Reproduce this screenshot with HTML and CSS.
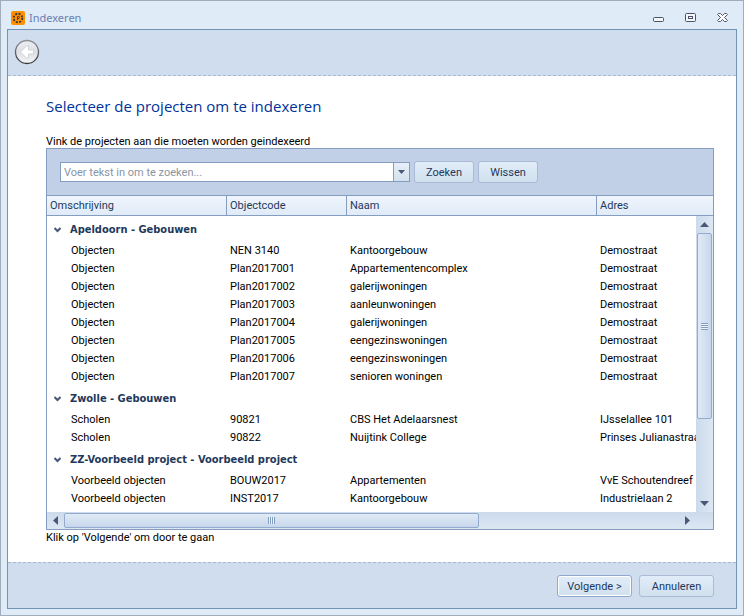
FILE: index.html
```html
<!DOCTYPE html>
<html lang="nl">
    <head>
        <meta charset="UTF-8" />
        <meta name="viewport" content="width=device-width, initial-scale=1.0" />
        <title>Indexeren</title>
        <link rel="stylesheet" href="styles.css">
    </head>
    <body>
        <div class="window">
            <header class="titlebar">
                <svg class="app-icon" width="14" height="14" viewBox="0 0 14 14">
                    <rect width="14" height="14" rx="2" fill="#ff9000" />
                    <circle cx="7" cy="7" r="4.3" fill="none" stroke="#3d3a3c" stroke-width="1.9" stroke-dasharray="2 1.377" />
                    <path d="M6.500 9V5.500h1a1 1 0 0 1 0 2h-1" fill="none" stroke="#3d3a3c" />
                </svg>
                <span class="title">Indexeren</span>
                <div class="window-buttons">
                    <button aria-label="Minimaliseren">
                        <svg width="11" height="10" viewBox="0 0 11 10">
                            <rect x="0.5" y="4.5" width="10" height="4" rx="1" fill="#f3f7fb" stroke="#4d5166" />
                        </svg>
                    </button>
                    <button aria-label="Maximaliseren">
                        <svg width="11" height="10" viewBox="0 0 11 10">
                            <rect x="0.5" y="0.5" width="10" height="8" rx="1" fill="#f3f7fb" stroke="#4d5166" />
                            <rect x="3.5" y="3.5" width="4" height="2" fill="#fff" stroke="#4d5166" />
                        </svg>
                    </button>
                    <button aria-label="Sluiten">
                        <svg width="11" height="10" viewBox="0 0 11 10">
                            <path d="M0.5 1.5l1-1h2l2 2 2-2h2l1 1-3 3 3 3-1 1h-2l-2-2-2 2h-2l-1-1 3-3z" fill="#fff" stroke="#4d5166" />
                        </svg>
                    </button>
                </div>
            </header>

            <div class="frame">
                <div class="wizard-header">
                    <button class="back" aria-label="Vorige" disabled>
                        <svg width="26" height="26" viewBox="0 0 26 26">
                            <defs>
                                <linearGradient id="ring" x1="0" y1="0" x2="0" y2="1">
                                    <stop offset="0" stop-color="#8e9094" />
                                    <stop offset="1" stop-color="#34363a" />
                                </linearGradient>
                                <linearGradient id="disc" x1="0" y1="0" x2="0" y2="1">
                                    <stop offset="0" stop-color="#eceef1" />
                                    <stop offset="0.5" stop-color="#dce0e5" />
                                    <stop offset="1" stop-color="#f4f6f8" />
                                </linearGradient>
                            </defs>
                            <circle cx="13" cy="13" r="11.5" fill="url(#disc)" stroke="url(#ring)" stroke-width="1.3" />
                            <path d="M6.5 13l6-6h2v4h5v4h-5v4h-2z" fill="#fff" stroke="#c9cdd2" stroke-width="0.8" stroke-linejoin="round" />
                        </svg>
                    </button>
                </div>

                <main class="page">
                    <h1>Selecteer de projecten om te indexeren</h1>
                    <p class="hint">Vink de projecten aan die moeten worden geindexeerd</p>

                    <section class="grid-panel">
                        <form class="search">
                            <div class="combo">
                                <input type="text" aria-label="Zoeken" placeholder="Voer tekst in om te zoeken..." />
                                <button type="button" class="combo-button" aria-label="Geschiedenis">
                                    <svg width="7" height="4" viewBox="0 0 7 4"><path d="M0 0h7L3.500 4z" fill="#4a5878" /></svg>
                                </button>
                            </div>
                            <button type="button" class="btn search-btn">Zoeken</button>
                            <button type="button" class="btn search-btn">Wissen</button>
                        </form>

                        <div class="grid">
                            <table>
                                <colgroup>
                                    <col class="col-desc" />
                                    <col class="col-code" />
                                    <col class="col-name" />
                                    <col />
                                </colgroup>
                                <thead>
                                    <tr>
                                        <th>Omschrijving</th>
                                        <th>Objectcode</th>
                                        <th>Naam</th>
                                        <th>Adres</th>
                                    </tr>
                                </thead>
                                <tbody>
                                    <tr class="group">
                                        <td colspan="4"><svg class="chevron" width="7" height="6" viewBox="0 0 7 6"><path d="M0.500 1l3 3 3-3" /></svg>Apeldoorn - Gebouwen</td>
                                    </tr>
                                    <tr><td>Objecten</td><td>NEN 3140</td><td>Kantoorgebouw</td><td>Demostraat</td></tr>
                                    <tr><td>Objecten</td><td>Plan2017001</td><td>Appartementencomplex</td><td>Demostraat</td></tr>
                                    <tr><td>Objecten</td><td>Plan2017002</td><td>galerijwoningen</td><td>Demostraat</td></tr>
                                    <tr><td>Objecten</td><td>Plan2017003</td><td>aanleunwoningen</td><td>Demostraat</td></tr>
                                    <tr><td>Objecten</td><td>Plan2017004</td><td>galerijwoningen</td><td>Demostraat</td></tr>
                                    <tr><td>Objecten</td><td>Plan2017005</td><td>eengezinswoningen</td><td>Demostraat</td></tr>
                                    <tr><td>Objecten</td><td>Plan2017006</td><td>eengezinswoningen</td><td>Demostraat</td></tr>
                                    <tr><td>Objecten</td><td>Plan2017007</td><td>senioren woningen</td><td>Demostraat</td></tr>
                                    <tr class="group">
                                        <td colspan="4"><svg class="chevron" width="7" height="6" viewBox="0 0 7 6"><path d="M0.500 1l3 3 3-3" /></svg>Zwolle - Gebouwen</td>
                                    </tr>
                                    <tr><td>Scholen</td><td>90821</td><td>CBS Het Adelaarsnest</td><td>IJsselallee 101</td></tr>
                                    <tr><td>Scholen</td><td>90822</td><td>Nuijtink College</td><td>Prinses Julianastraat</td></tr>
                                    <tr class="group">
                                        <td colspan="4"><svg class="chevron" width="7" height="6" viewBox="0 0 7 6"><path d="M0.500 1l3 3 3-3" /></svg>ZZ-Voorbeeld project - Voorbeeld project</td>
                                    </tr>
                                    <tr><td>Voorbeeld objecten</td><td>BOUW2017</td><td>Appartementen</td><td>VvE Schoutendreef</td></tr>
                                    <tr><td>Voorbeeld objecten</td><td>INST2017</td><td>Kantoorgebouw</td><td>Industrielaan 2</td></tr>
                                </tbody>
                            </table>

                            <div class="scroll-v">
                                <svg class="arrow" width="9" height="5" viewBox="0 0 9 5"><path d="M0 5h9L4.500 0z" /></svg>
                                <div class="track">
                                    <div class="thumb"><span class="grip"></span></div>
                                </div>
                                <svg class="arrow" width="9" height="5" viewBox="0 0 9 5"><path d="M0 0h9L4.500 5z" /></svg>
                            </div>

                            <div class="scroll-h">
                                <svg class="arrow" width="5" height="9" viewBox="0 0 5 9"><path d="M5 0v9L0 4.500z" /></svg>
                                <div class="track">
                                    <div class="thumb"><span class="grip"></span></div>
                                </div>
                                <svg class="arrow" width="5" height="9" viewBox="0 0 5 9"><path d="M0 0v9L5 4.500z" /></svg>
                            </div>
                        </div>
                    </section>

                    <p class="next-hint">Klik op 'Volgende' om door te gaan</p>
                </main>

                <footer class="wizard-footer">
                    <button class="btn default">Volgende &gt;</button>
                    <button class="btn">Annuleren</button>
                </footer>
            </div>
        </div>
    </body>
</html>
```
FILE: styles.css
```css
* {
    box-sizing: border-box;
}

body {
    margin: 0;
    font-family: Roboto, "Liberation Sans", sans-serif;
    font-size: 11px;
    line-height: 14px;
    color: #000;
}

button,
input {
    font: inherit;
    margin: 0;
}

svg {
    display: block;
}

.window {
    display: flex;
    flex-direction: column;
    min-height: 100vh;
    padding: 0 6px 6px;
    background: #dfebf7;
    border: 1px solid #a0adbc;
}

.titlebar {
    display: flex;
    align-items: center;
    height: 28px;
    padding: 5px 9px 0 4px;
}

.title {
    margin-left: 4px;
    font-family: "Noto Sans", sans-serif;
    color: #6a80b4;
}

.window-buttons {
    display: flex;
    gap: 21px;
    margin-left: auto;
}

.window-buttons button {
    padding: 0;
    border: none;
    background: none;
}

.frame {
    flex: 1;
    display: flex;
    flex-direction: column;
    border: 1px solid #7393b2;
    background: #fff;
}

.wizard-header {
    height: 46px;
    padding: 9px 6px;
    background: #d0ddee;
    border-bottom: 1px dashed #a9b8d3;
}

.back {
    display: block;
    padding: 0;
    border: none;
    background: none;
}

.page {
    flex: 1;
    display: flex;
    flex-direction: column;
    padding: 19px 22px 16px 38px;
}

h1 {
    margin: 0 0 19px;
    font-family: "Open Sans", sans-serif;
    font-size: 15px;
    font-weight: normal;
    line-height: 22px;
    color: #003399;
}

.hint,
.next-hint {
    margin: 0;
}

.hint {
    line-height: 12px;
}

.next-hint {
    line-height: 16px;
}

.grid-panel {
    flex: 1;
    display: flex;
    flex-direction: column;
    border: 1px solid #859ebf;
    background: #fff;
}

.search {
    display: flex;
    align-items: center;
    gap: 4px;
    height: 46px;
    padding: 0 13px;
    background: #c1d0e7;
}

.combo {
    display: flex;
    width: 350px;
    height: 20px;
    border: 1px solid #859ebf;
    background: #fff;
}

.combo input {
    flex: 1;
    min-width: 0;
    padding: 2px 3px 0;
    border: none;
    outline: none;
}

.combo input::placeholder {
    color: #8a94a3;
}

.combo-button {
    display: flex;
    align-items: center;
    justify-content: center;
    width: 16px;
    padding: 0;
    border: none;
    border-left: 1px solid #859ebf;
    background: linear-gradient(#e6eff9, #d3e1ee);
}

.btn {
    width: 75px;
    height: 22px;
    padding: 2px 0 0;
    border: 1px solid #abbad5;
    border-radius: 3px;
    background: linear-gradient(#e1edf9, #d1e0ee);
    color: #1e395b;
}

.search-btn {
    width: 60px;
}

.grid {
    flex: 1;
    display: grid;
    grid-template-columns: minmax(0, 1fr) 17px;
    grid-template-rows: 21px 1fr 17px;
}

table {
    grid-area: 1 / 1 / 3 / 3;
    align-self: start;
    width: 100%;
    table-layout: fixed;
    border-collapse: separate;
    border-spacing: 0;
}

.col-desc {
    width: 180px;
}

.col-code {
    width: 120px;
}

.col-name {
    width: 250px;
}

th {
    height: 21px;
    padding: 0 3px;
    border: 1px solid #859ebf;
    border-width: 1px 1px 1px 0;
    background: linear-gradient(#f0f5fc, #dfebf8);
    font-weight: normal;
    text-align: left;
    color: #1e395b;
}

th:last-child {
    border-right: none;
}

td {
    height: 18px;
    padding: 2px 3px 0;
    overflow: hidden;
    white-space: nowrap;
}

td:first-child {
    padding-left: 24px;
}

.group td {
    height: 25px;
    padding-left: 7px;
    font-family: "DejaVu Sans Condensed", "DejaVu Sans", sans-serif;
    font-weight: bold;
    color: #1e395b;
}

.chevron {
    display: inline-block;
    margin-right: 9px;
    fill: none;
    stroke: #4a5878;
    stroke-width: 2;
}

.scroll-v {
    grid-area: 2 / 2;
    display: flex;
    flex-direction: column;
    align-items: center;
    padding: 6px 1px;
    background: linear-gradient(to right, #ccdaeb, #dce7f3);
}

.scroll-h {
    grid-area: 3 / 1 / 4 / 3;
    display: flex;
    align-items: center;
    padding: 1px 23px 1px 6px;
    background: linear-gradient(#ccdaeb, #dce7f3);
}

.track {
    flex: 1;
}

.scroll-v .track {
    width: 100%;
    margin: 6px 0;
}

.scroll-h .track {
    height: 100%;
    margin: 0 6px;
}

.thumb {
    display: flex;
    align-items: center;
    justify-content: center;
    border: 1px solid #94abcf;
    border-radius: 2px;
}

.scroll-v .thumb {
    height: 71%;
    background: linear-gradient(to right, #e1eaf6, #c7d7eb);
}

.scroll-h .thumb {
    width: 67.5%;
    height: 100%;
    background: linear-gradient(#e1eaf6, #c7d7eb);
}

.scroll-v .grip {
    width: 7px;
    height: 7px;
    background: repeating-linear-gradient(#859ebf 0 1px, #e9f1fa 1px 2px);
}

.scroll-h .grip {
    width: 7px;
    height: 7px;
    background: repeating-linear-gradient(to right, #859ebf 0 1px, #e9f1fa 1px 2px);
}

.arrow {
    flex: none;
    fill: #4a5878;
}

.wizard-footer {
    display: flex;
    align-items: center;
    justify-content: flex-end;
    gap: 7px;
    height: 46px;
    padding: 0 22px;
    background: #d0ddee;
    border-top: 1px dashed #a9b8d3;
}

.default {
    border-color: #8fa8cc;
    box-shadow: inset 0 0 0 1px #fff;
}
```
